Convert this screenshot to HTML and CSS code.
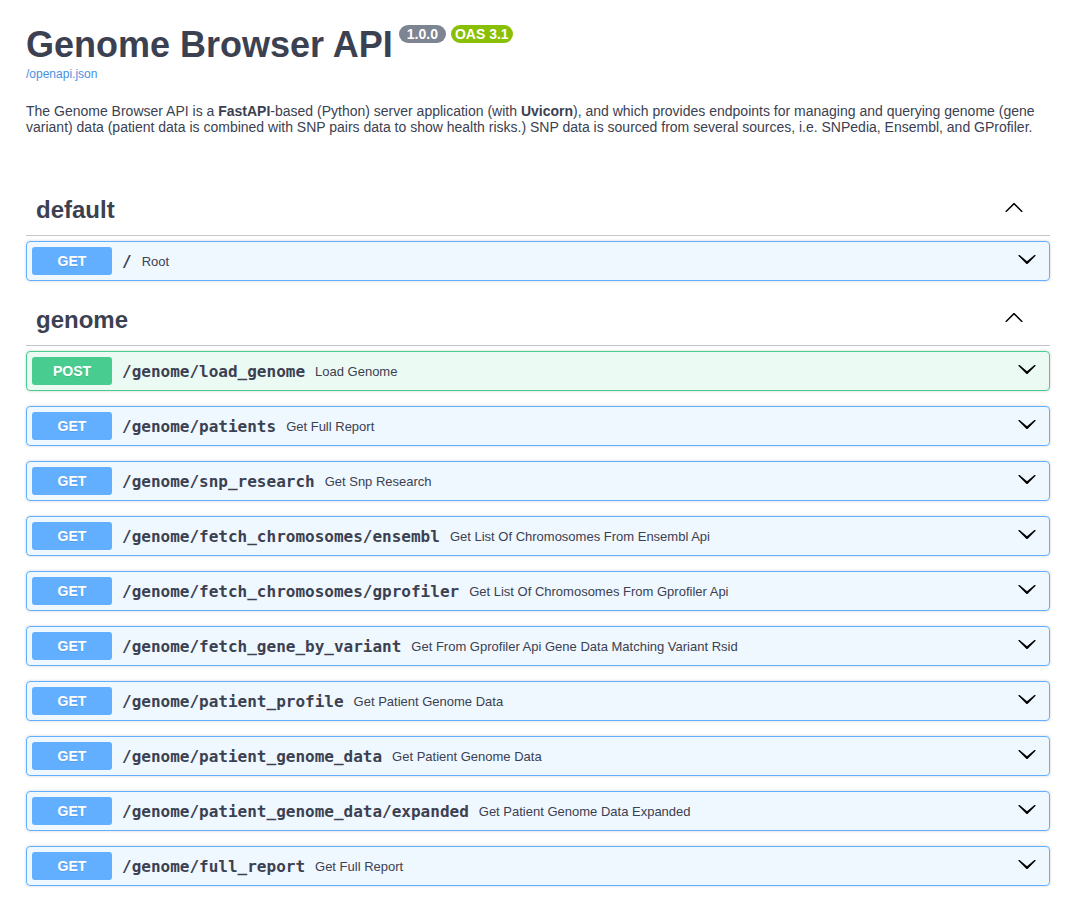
FILE: index.html
```html
<!DOCTYPE html>
<html lang="en">
<head>
<meta charset="utf-8">
<title>Genome Browser API - Swagger UI</title>
<link rel="stylesheet" href="styles.css">
</head>
<body>
<svg class="defs" xmlns="http://www.w3.org/2000/svg" aria-hidden="true">
  <symbol id="arrow-up" viewBox="0 0 20 20">
    <path d="M17.418 14.908c.272.268.709.268.979 0s.271-.701 0-.969l-7.908-7.83c-.27-.268-.707-.268-.979 0l-7.908 7.83c-.27.268-.27.701 0 .969.271.268.709.268.979 0L10 7.767l7.418 7.141z"/>
  </symbol>
  <symbol id="arrow-down" viewBox="0 0 20 20">
    <path d="M17.418 6.109c.272-.268.709-.268.979 0s.271.701 0 .969l-7.908 7.83c-.27.268-.707.268-.979 0l-7.908-7.83c-.27-.268-.27-.701 0-.969.271-.268.709-.268.979 0L10 12.233l7.418-6.124z"/>
  </symbol>
</svg>
<div class="wrapper">
  <div class="info">
    <div class="title-row">
      <h2 class="title">Genome Browser API</h2>
      <span class="badge badge-version">1.0.0</span>
      <span class="badge badge-oas">OAS 3.1</span>
    </div>
    <a class="spec-link" href="#">/openapi.json</a>
    <p class="description">The Genome Browser API is a <b>FastAPI</b>-based (Python) server application (with <b>Uvicorn</b>), and which provides endpoints for managing and querying genome (gene variant) data (patient data is combined with SNP pairs data to show health risks.) SNP data is sourced from several sources, i.e. SNPedia, Ensembl, and GProfiler.</p>
  </div>

  <section class="tag-section">
    <h3 class="tag"><span class="tag-name">default</span><svg class="tag-arrow"><use href="#arrow-up"/></svg></h3>
    <div class="op op-get"><span class="method">GET</span><span class="path">/</span><span class="summary">Root</span><svg class="op-arrow"><use href="#arrow-down"/></svg></div>
  </section>

  <section class="tag-section">
    <h3 class="tag"><span class="tag-name">genome</span><svg class="tag-arrow"><use href="#arrow-up"/></svg></h3>
    <div class="op op-post"><span class="method">POST</span><span class="path">/genome/load_genome</span><span class="summary">Load Genome</span><svg class="op-arrow"><use href="#arrow-down"/></svg></div>
    <div class="op op-get"><span class="method">GET</span><span class="path">/genome/patients</span><span class="summary">Get Full Report</span><svg class="op-arrow"><use href="#arrow-down"/></svg></div>
    <div class="op op-get"><span class="method">GET</span><span class="path">/genome/snp_research</span><span class="summary">Get Snp Research</span><svg class="op-arrow"><use href="#arrow-down"/></svg></div>
    <div class="op op-get"><span class="method">GET</span><span class="path">/genome/fetch_chromosomes/ensembl</span><span class="summary">Get List Of Chromosomes From Ensembl Api</span><svg class="op-arrow"><use href="#arrow-down"/></svg></div>
    <div class="op op-get"><span class="method">GET</span><span class="path">/genome/fetch_chromosomes/gprofiler</span><span class="summary">Get List Of Chromosomes From Gprofiler Api</span><svg class="op-arrow"><use href="#arrow-down"/></svg></div>
    <div class="op op-get"><span class="method">GET</span><span class="path">/genome/fetch_gene_by_variant</span><span class="summary">Get From Gprofiler Api Gene Data Matching Variant Rsid</span><svg class="op-arrow"><use href="#arrow-down"/></svg></div>
    <div class="op op-get"><span class="method">GET</span><span class="path">/genome/patient_profile</span><span class="summary">Get Patient Genome Data</span><svg class="op-arrow"><use href="#arrow-down"/></svg></div>
    <div class="op op-get"><span class="method">GET</span><span class="path">/genome/patient_genome_data</span><span class="summary">Get Patient Genome Data</span><svg class="op-arrow"><use href="#arrow-down"/></svg></div>
    <div class="op op-get"><span class="method">GET</span><span class="path">/genome/patient_genome_data/expanded</span><span class="summary">Get Patient Genome Data Expanded</span><svg class="op-arrow"><use href="#arrow-down"/></svg></div>
    <div class="op op-get"><span class="method">GET</span><span class="path">/genome/full_report</span><span class="summary">Get Full Report</span><svg class="op-arrow"><use href="#arrow-down"/></svg></div>
  </section>
</div>
</body>
</html>
```

FILE: styles.css
```css
* { box-sizing: border-box; }

html, body {
  margin: 0;
  padding: 0;
  background: #fff;
}

body {
  font-family: "Liberation Sans", Arial, sans-serif;
  color: #3b4151;
}

.defs {
  width: 0;
  height: 0;
  position: absolute;
  overflow: hidden;
}

.wrapper {
  padding: 0 27px 0 26px;
}

.info {
  padding-top: 24px;
  margin-bottom: 51px;
}

.title-row {
  display: flex;
  align-items: flex-start;
}

.title {
  margin: 0;
  font-size: 36px;
  line-height: 41px;
  font-weight: 700;
  color: #3b4151;
}

.badge {
  display: inline-block;
  margin-top: 1px;
  margin-left: 5px;
  border-radius: 57px;
  color: #fff;
  font-size: 14px;
  line-height: 14px;
  font-weight: 700;
  padding: 2px 8px;
}

.badge-version {
  background: #7d8492;
  margin-left: 6px;
}

.badge-oas {
  background: #89bf04;
  padding: 2px 4px;
}

.spec-link {
  display: block;
  margin-top: 2px;
  font-size: 12px;
  line-height: 14px;
  color: #4990e2;
  text-decoration: none;
}

.description {
  margin: 22px 0 0;
  font-size: 14px;
  line-height: 16px;
  color: #3b4151;
}

.tag-section {
  display: flex;
  flex-direction: column;
}

.tag {
  display: flex;
  align-items: center;
  height: 50px;
  margin: 0 0 5px;
  padding: 0 26px 0 10px;
  border-bottom: 1px solid rgba(59, 65, 81, 0.3);
  font-size: 24px;
  font-weight: 700;
  color: #3b4151;
}

.tag-name {
  flex: 1;
  position: relative;
  top: -1px;
}

.tag-arrow {
  width: 20px;
  height: 20px;
  fill: #000;
  margin-bottom: 7px;
}

.op {
  display: flex;
  align-items: center;
  height: 40px;
  margin: 0 0 15px;
  padding: 0 12px 0 5px;
  border: 1px solid #61affe;
  border-radius: 4px;
  box-shadow: 0 0 3px rgba(0, 0, 0, 0.19);
}

.op-get {
  background: rgba(97, 175, 254, 0.1);
  border-color: #61affe;
}

.op-post {
  background: rgba(73, 204, 144, 0.1);
  border-color: #49cc90;
}

.method {
  min-width: 80px;
  padding: 6px 0;
  border-radius: 3px;
  font-size: 14px;
  line-height: 16px;
  font-weight: 700;
  text-align: center;
  color: #fff;
  text-shadow: 0 1px 0 rgba(0, 0, 0, 0.1);
}

.op-get .method { background: #61affe; }
.op-post .method { background: #49cc90; }

.path {
  padding: 0 10px;
  font-family: "DejaVu Sans Mono", "Liberation Mono", monospace;
  font-size: 16px;
  font-weight: 700;
  color: #3b4151;
}

.summary {
  flex: 1;
  font-size: 13px;
  color: #3b4151;
}

.op-arrow {
  width: 20px;
  height: 20px;
  fill: #000;
  margin-bottom: 4px;
}
```
